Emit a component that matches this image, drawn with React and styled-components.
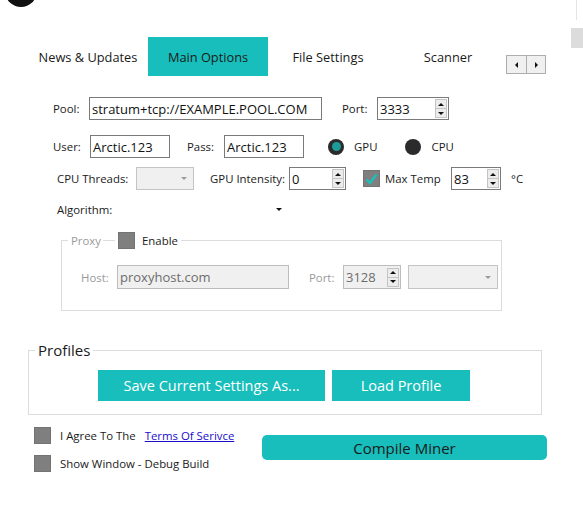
import React from 'react';
import styled, { createGlobalStyle } from 'styled-components';

const TEAL = '#17bebb';
const FONT = '"Open Sans", "Noto Sans", sans-serif';

const Global = createGlobalStyle`
  html, body { margin: 0; padding: 0; background: #fff; }
  body { font-family: ${FONT}; color: #1a1a1a; font-size: 12px; }
  * { box-sizing: border-box; }
`;

const Window = styled.div`
  position: relative;
  width: 583px;
  height: 515px;
  background: #fff;
  overflow: hidden;
`;

const TitleBar = styled.div`
  height: 7px;
  overflow: hidden;
  display: flex;
  align-items: flex-end;
  padding-left: 5px;
`;

const Logo = styled.div`
  flex: none;
  width: 32px;
  height: 32px;
  border-radius: 50%;
  background: #111;
`;

const ScrollTrack = styled.div`
  position: absolute;
  right: 6px;
  top: 0;
  width: 1px;
  height: 20px;
  background: #e4e4e4;
`;

const ScrollThumb = styled.div`
  position: absolute;
  right: 0;
  top: 28px;
  width: 12px;
  height: 20px;
  background: #dcdcdc;
`;

const TabStrip = styled.div`
  display: flex;
  align-items: stretch;
  height: 39px;
  margin-top: 30px;
  padding-left: 28px;
`;

const Tab = styled.div`
  width: 120px;
  display: flex;
  align-items: center;
  justify-content: center;
  font-size: 12.8px;
  color: #1a1a1a;
  background: ${p => (p.$active ? TEAL : 'transparent')};
`;

const TabArrows = styled.div`
  align-self: flex-end;
  margin: 0 0 2px -2px;
  display: flex;
  border: 1px solid #adadad;
  background: #f0f0f0;
  height: 19px;
`;

const ArrowBtn = styled.div`
  width: 19px;
  display: flex;
  align-items: center;
  justify-content: center;
  & + & { border-left: 1px solid #adadad; }
`;

const Tri = styled.span`
  width: 0;
  height: 0;
  border-style: solid;
  ${p =>
    p.$dir === 'left'
      ? `border-width: 3px 3px 3px 0; border-color: transparent ${p.$c || '#111'} transparent transparent;`
      : p.$dir === 'right'
      ? `border-width: 3px 0 3px 3px; border-color: transparent transparent transparent ${p.$c || '#111'};`
      : p.$dir === 'up'
      ? `border-width: 0 3px 3px 3px; border-color: transparent transparent ${p.$c || '#111'} transparent;`
      : `border-width: 3px 3px 0 3px; border-color: ${p.$c || '#111'} transparent transparent transparent;`}
`;

const Form = styled.div`
  padding-top: 21px;
  display: flex;
  flex-direction: column;
`;

const Row = styled.div`
  display: flex;
  align-items: center;
  height: ${p => p.$h || 23}px;
  margin-top: ${p => p.$mt || 0}px;
  padding-left: ${p => p.$pl || 0}px;
`;

const Label = styled.span`
  flex: none;
  width: ${p => (p.$w ? `${p.$w}px` : 'auto')};
  margin-left: ${p => p.$ml || 0}px;
  font-size: 11.4px;
  color: ${p => (p.$dim ? '#9a9a9a' : '#1a1a1a')};
  white-space: nowrap;
`;

const TextBox = styled.div`
  flex: none;
  width: ${p => p.$w}px;
  height: ${p => p.$h || 23}px;
  margin-left: ${p => p.$ml || 0}px;
  border: 1px solid ${p => (p.$disabled ? '#bcbcbc' : '#7a7a7a')};
  background: ${p => (p.$disabled ? '#f0f0f0' : '#fff')};
  color: ${p => (p.$disabled ? '#6d6d6d' : '#111')};
  font-size: 13px;
  display: flex;
  align-items: center;
  padding-left: 2px;
  white-space: nowrap;
  overflow: hidden;
`;

const NumBox = styled(TextBox)`
  justify-content: space-between;
  padding-right: 1px;
`;

const Spin = styled.div`
  width: 12px;
  height: 19px;
  display: flex;
  flex-direction: column;
  border: 1px solid #c4c4c4;
  background: #ececec;
`;

const SpinHalf = styled.div`
  flex: 1;
  display: flex;
  align-items: center;
  justify-content: center;
  & + & { border-top: 1px solid #c4c4c4; }
`;

const Combo = styled.div`
  flex: none;
  width: ${p => p.$w}px;
  height: ${p => p.$h || 23}px;
  margin-left: ${p => p.$ml || 0}px;
  border: ${p => (p.$bare ? 'none' : '1px solid #c4c4c4')};
  background: ${p => (p.$bare ? '#fff' : '#f0f0f0')};
  display: flex;
  align-items: center;
  justify-content: flex-end;
  padding-right: ${p => (p.$bare ? 4 : 6)}px;
`;

const Radio = styled.span`
  flex: none;
  width: 16px;
  height: 16px;
  border-radius: 50%;
  margin-left: ${p => p.$ml || 0}px;
  background: #2b2b2b;
  display: flex;
  align-items: center;
  justify-content: center;
  &::after {
    content: '';
    width: 9px;
    height: 9px;
    border-radius: 50%;
    background: ${p => (p.$checked ? '#1c9c98' : 'transparent')};
  }
`;

const Check = styled.span`
  flex: none;
  width: 17px;
  height: 17px;
  margin-left: ${p => p.$ml || 0}px;
  background: #7f7f7f;
  border: 1px solid #737373;
  display: flex;
  align-items: center;
  justify-content: center;
`;

const Group = styled.fieldset`
  margin: ${p => p.$mt}px 0 0 ${p => p.$ml}px;
  width: ${p => p.$w}px;
  border: 1px solid #dcdcdc;
  padding: 0;
  min-width: 0;
`;

const GroupBody = styled.div`
  padding: ${p => p.$pt}px 0 ${p => p.$pb}px ${p => p.$pl}px;
`;

const Legend = styled.legend`
  margin-left: ${p => p.$ml}px;
  padding: 0 3px;
  display: flex;
  align-items: center;
  font-size: ${p => p.$fs || 12}px;
  color: #1a1a1a;
`;

const LegendLine = styled.span`
  width: 12px;
  height: 1px;
  background: #dcdcdc;
  margin: 0 3px 0 2px;
`;

const ButtonRow = styled.div`
  display: flex;
  gap: 7px;
`;

const TealButton = styled.div`
  width: ${p => p.$w}px;
  height: ${p => p.$h}px;
  background: ${TEAL};
  border-radius: ${p => p.$r || 0}px;
  display: flex;
  align-items: center;
  justify-content: center;
  font-size: ${p => p.$fs || 14}px;
  color: ${p => p.$color || '#fff'};
`;

const Bottom = styled.div`
  display: flex;
  margin-top: 12px;
  padding-left: 34px;
`;

const CheckList = styled.div`
  width: 228px;
  display: flex;
  flex-direction: column;
  gap: 11px;
`;

const CheckRow = styled.div`
  display: flex;
  align-items: center;
  height: 17px;
`;

const Link = styled.a`
  margin-left: 9px;
  font-size: 11.4px;
  color: #1a0dcc;
  text-decoration: underline;
`;

const CompileWrap = styled.div`
  margin-top: 8px;
`;

const Tick = () => (
  <svg width="13" height="12" viewBox="0 0 13 12">
    <path d="M1.5 6.5 L5 10 L11.5 1.5" fill="none" stroke="#19c0bc" strokeWidth="2.4" />
  </svg>
);

const Spinner = () => (
  <Spin>
    <SpinHalf><Tri $dir="up" /></SpinHalf>
    <SpinHalf><Tri $dir="down" /></SpinHalf>
  </Spin>
);

export default function App() {
  return (
    <Window>
      <Global />
      <TitleBar><Logo /></TitleBar>
      <ScrollTrack />
      <ScrollThumb />

      <TabStrip>
        <Tab>News &amp; Updates</Tab>
        <Tab $active>Main Options</Tab>
        <Tab>File Settings</Tab>
        <Tab>Scanner</Tab>
        <TabArrows>
          <ArrowBtn><Tri $dir="left" /></ArrowBtn>
          <ArrowBtn><Tri $dir="right" /></ArrowBtn>
        </TabArrows>
      </TabStrip>

      <Form>
        <Row $pl={53}>
          <Label $w={36}>Pool:</Label>
          <TextBox $w={233}>stratum+tcp://EXAMPLE.POOL.COM</TextBox>
          <Label $ml={20} $w={35}>Port:</Label>
          <NumBox $w={72}>3333<Spinner /></NumBox>
        </Row>

        <Row $pl={53} $mt={15}>
          <Label $w={37}>User:</Label>
          <TextBox $w={80}>Arctic.123</TextBox>
          <Label $ml={17} $w={37}>Pass:</Label>
          <TextBox $w={80}>Arctic.123</TextBox>
          <Radio $ml={24} $checked />
          <Label $ml={10}>GPU</Label>
          <Radio $ml={28} />
          <Label $ml={10}>CPU</Label>
        </Row>

        <Row $pl={57} $mt={9}>
          <Label $w={79}>CPU Threads:</Label>
          <Combo $w={58}><Tri $dir="down" $c="#9a9a9a" /></Combo>
          <Label $ml={16} $w={79}>GPU Intensity:</Label>
          <NumBox $w={57}>0<Spinner /></NumBox>
          <Check $ml={17}><Tick /></Check>
          <Label $ml={5} $w={66}>Max Temp</Label>
          <NumBox $w={50}>83<Spinner /></NumBox>
          <Label $ml={10}>°C</Label>
        </Row>

        <Row $pl={57} $mt={10} $h={18}>
          <Label $w={79}>Algorithm:</Label>
          <Combo $w={150} $h={18} $bare><Tri $dir="down" /></Combo>
        </Row>

        <Group $mt={14} $ml={61} $w={441}>
          <Legend $ml={6}>
            <Label $dim>Proxy</Label>
            <LegendLine />
            <Check />
            <Label $ml={7}>Enable</Label>
          </Legend>
          <GroupBody $pt={16} $pb={21} $pl={19}>
            <Row $h={24}>
              <Label $dim $w={36}>Host:</Label>
              <TextBox $w={172} $h={24} $disabled>proxyhost.com</TextBox>
              <Label $dim $ml={20} $w={34}>Port:</Label>
              <NumBox $w={58} $h={24} $disabled>3128<Spinner /></NumBox>
              <Combo $w={90} $h={24} $ml={7}><Tri $dir="down" $c="#9a9a9a" /></Combo>
            </Row>
          </GroupBody>
        </Group>

        <Group $mt={29} $ml={28} $w={514}>
          <Legend $ml={6} $fs={15}>Profiles</Legend>
          <GroupBody $pt={10} $pb={13} $pl={69}>
            <ButtonRow>
              <TealButton $w={227} $h={31} $fs={14.5}>Save Current Settings As...</TealButton>
              <TealButton $w={138} $h={31} $fs={14.5}>Load Profile</TealButton>
            </ButtonRow>
          </GroupBody>
        </Group>

        <Bottom>
          <CheckList>
            <CheckRow>
              <Check />
              <Label $ml={9}>I Agree To The</Label>
              <Link>Terms Of Serivce</Link>
            </CheckRow>
            <CheckRow>
              <Check />
              <Label $ml={9}>Show Window - Debug Build</Label>
            </CheckRow>
          </CheckList>
          <CompileWrap>
            <TealButton $w={285} $h={25} $r={5} $fs={15} $color="#1a1a1a">Compile Miner</TealButton>
          </CompileWrap>
        </Bottom>
      </Form>
    </Window>
  );
}
